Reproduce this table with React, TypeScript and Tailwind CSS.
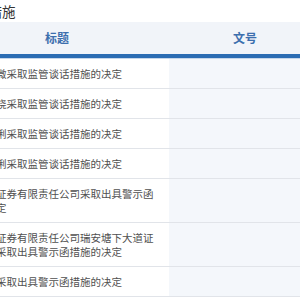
import React from "react";

const rows: string[] = [
  "关于对张微采取监管谈话措施的决定",
  "关于对李晓采取监管谈话措施的决定",
  "关于对王俐采取监管谈话措施的决定",
  "关于对陈俐采取监管谈话措施的决定",
  "关于华福证券有限责任公司采取出具警示函措施的决定",
  "关于华福证券有限责任公司瑞安塘下大道证券营业部采取出具警示函措施的决定",
  "关于对某采取出具警示函措施的决定",
];

export default function App() {
  return (
    <div
      className="w-[300px] h-[300px] overflow-hidden bg-white"
      style={{ fontFamily: '"Noto Sans CJK SC", "Noto Sans", sans-serif' }}
    >
      <div className="ml-[-55px] w-[376px]">
        <div className="h-[22px] flex items-center">
          <span className="ml-[16.5px] text-[13.5px] leading-[22px] text-[#333]">监管措施</span>
        </div>
        <div className="bg-[#f1f4f9] border-b border-[#c6d6ea]">
          <div className="grid grid-cols-[224px_152px] border-b-4 border-[#2b6cb3]">
            <div className="h-[32px] flex items-center justify-center text-[12px] font-bold text-[#3d6fae]">
              标题
            </div>
            <div className="h-[32px] flex items-center justify-center text-[12px] font-bold text-[#3d6fae]">
              文号
            </div>
          </div>
        </div>
        {rows.map((t, i) => (
          <div key={i} className="grid grid-cols-[224px_152px] border-b border-[#e1e4e9]">
            <div className="px-[9px] py-[7.5px] text-[10.5px] leading-[14px] text-[#505050]">{t}</div>
            <div className="bg-[#f4f7fb]"></div>
          </div>
        ))}
      </div>
    </div>
  );
}
